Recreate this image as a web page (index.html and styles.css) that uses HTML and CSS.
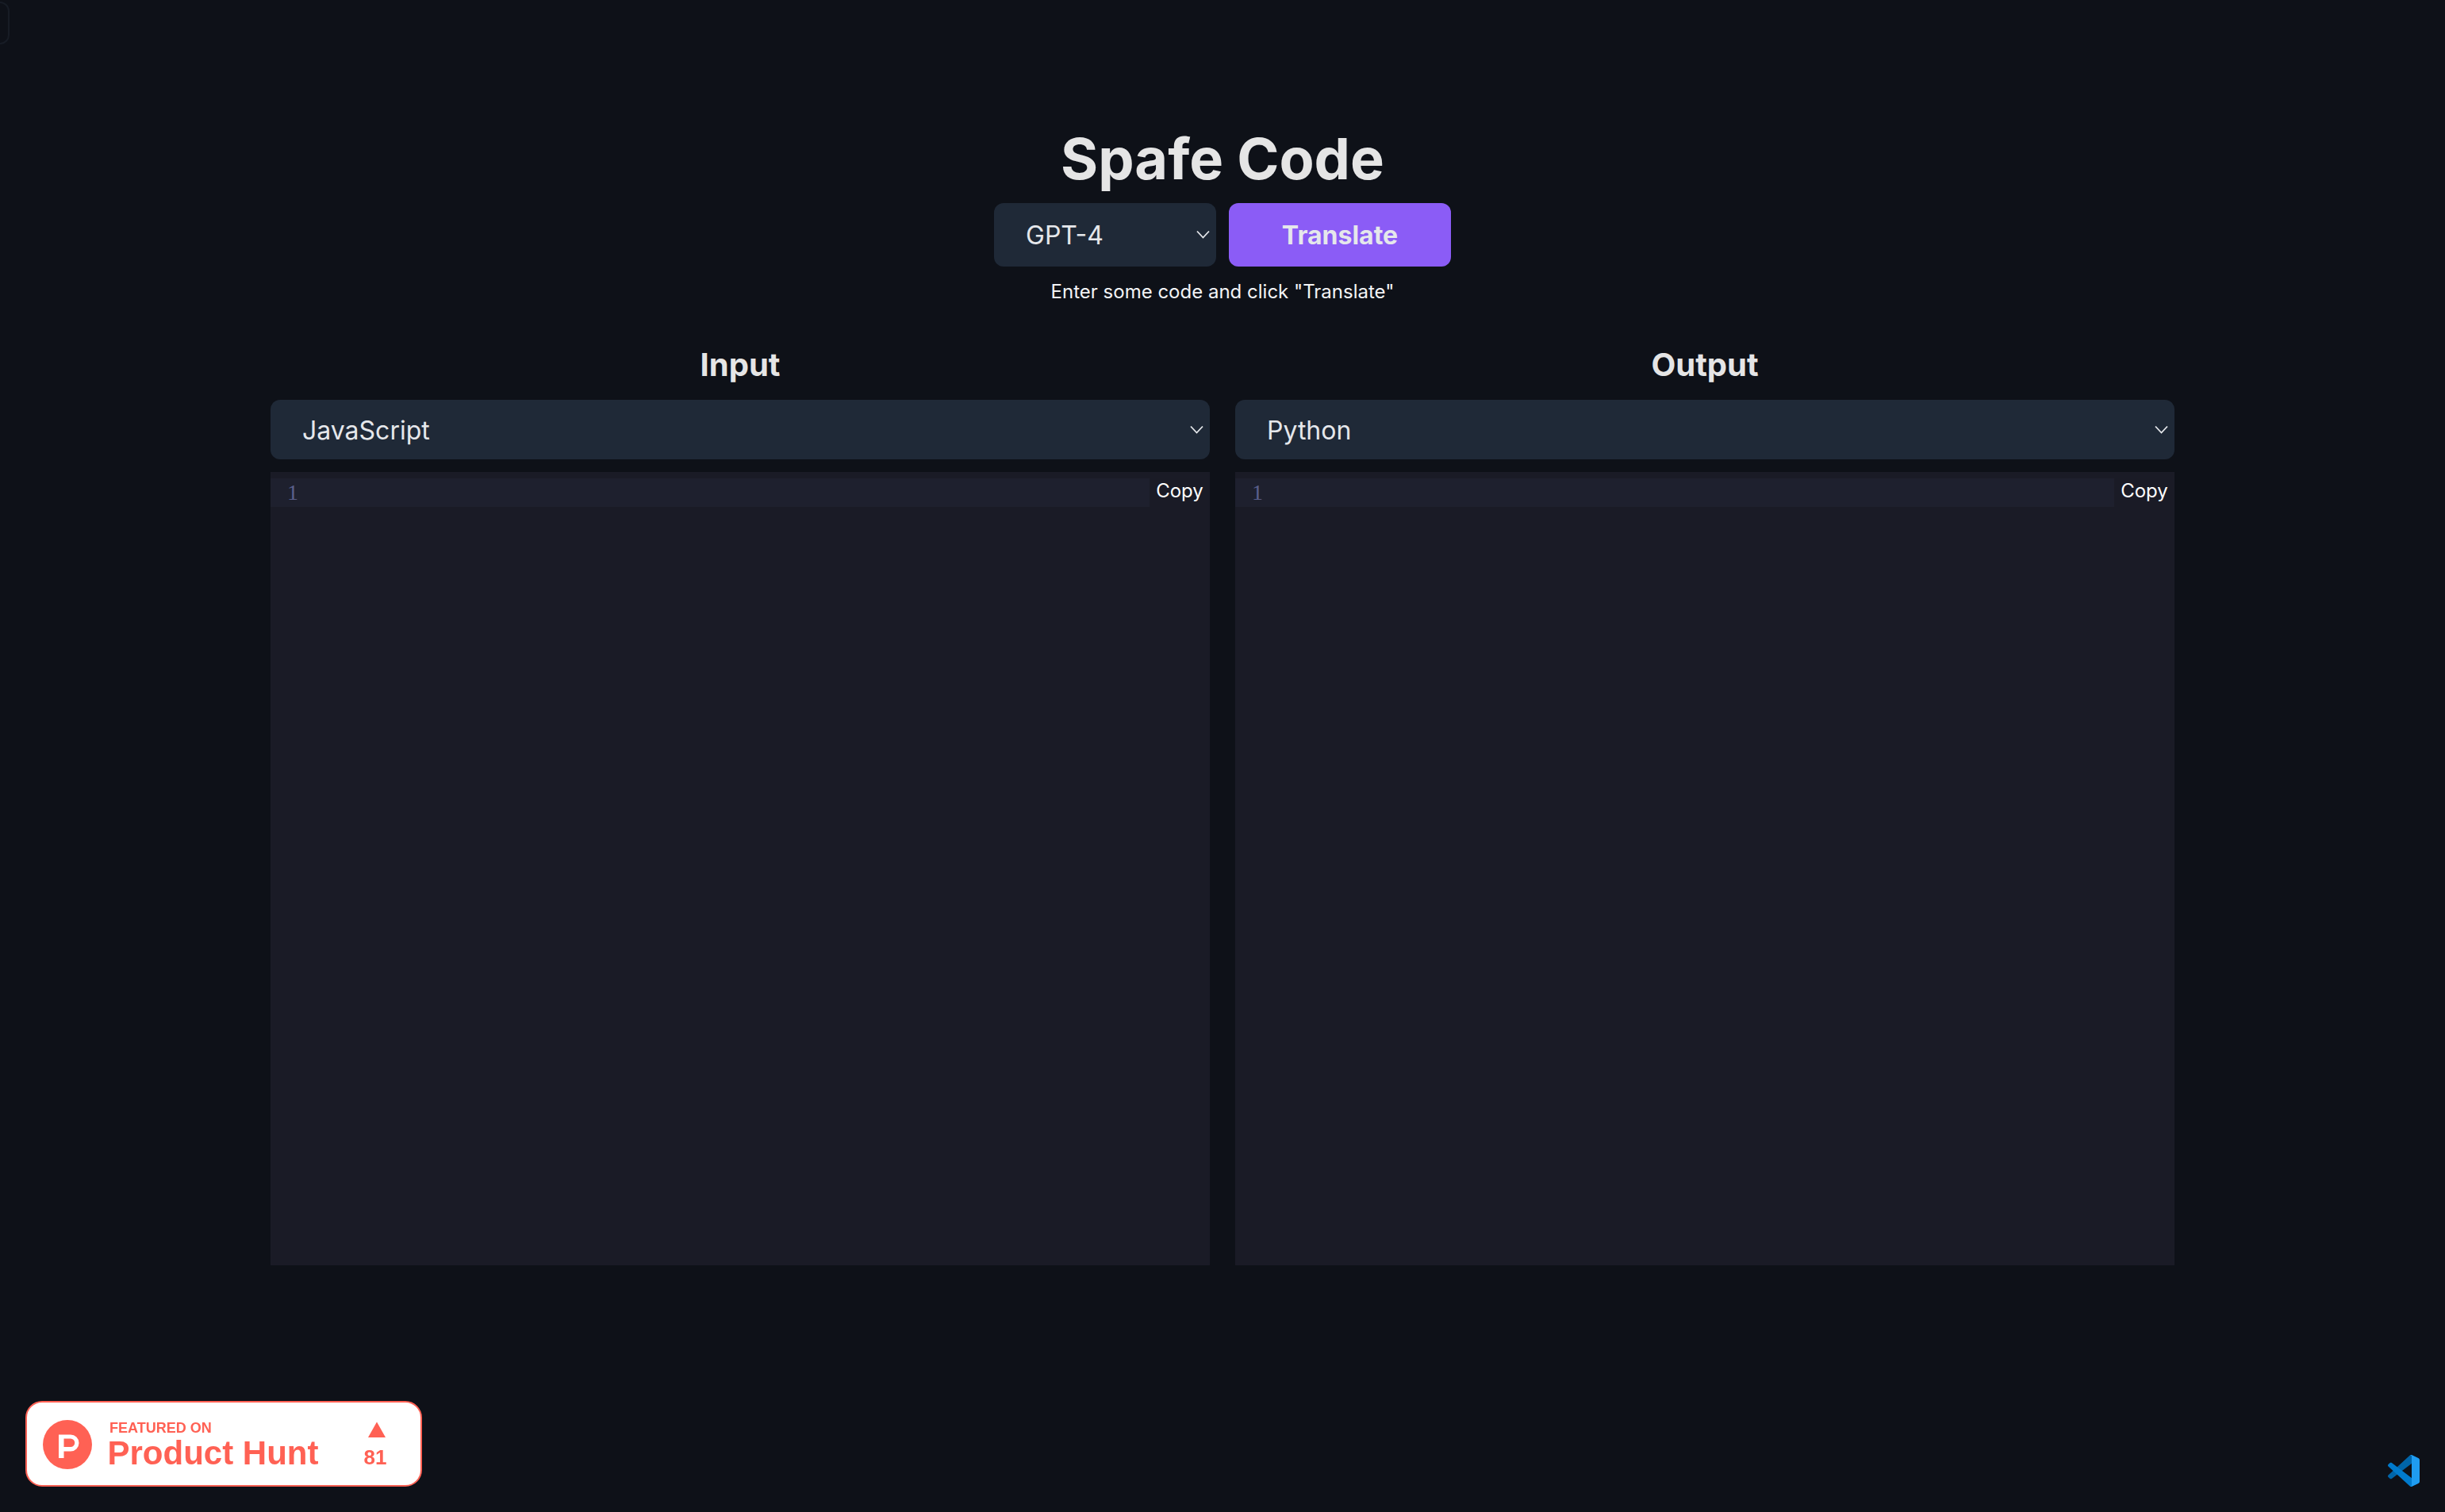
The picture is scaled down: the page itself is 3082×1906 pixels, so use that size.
FILE: index.html
```html
<!DOCTYPE html>
<html lang="en">
<head>
<meta charset="utf-8">
<title>Spafe Code</title>
<link rel="stylesheet" href="styles.css">
</head>
<body>
<div class="corner-ghost"></div>
<main class="page">
  <h1 class="title">Spafe Code</h1>
  <div class="controls">
    <div class="select-wrap model">
      <select class="select"><option>GPT-4</option></select>
      <svg class="chevron" viewBox="0 0 17 11"><path d="M1 1.5l7.5 8 7.5-8" fill="none" stroke="currentColor" stroke-width="1.8"/></svg>
    </div>
    <button class="translate">Translate</button>
  </div>
  <p class="hint">Enter some code and click "Translate"</p>
  <div class="panes">
    <section class="pane">
      <h2 class="pane-title">Input</h2>
      <div class="select-wrap">
        <select class="select"><option>JavaScript</option></select>
        <svg class="chevron" viewBox="0 0 17 11"><path d="M1 1.5l7.5 8 7.5-8" fill="none" stroke="currentColor" stroke-width="1.8"/></svg>
      </div>
      <div class="editor">
        <div class="line"><span class="num">1</span></div>
        <button class="copy">Copy</button>
      </div>
    </section>
    <section class="pane">
      <h2 class="pane-title">Output</h2>
      <div class="select-wrap">
        <select class="select"><option>Python</option></select>
        <svg class="chevron" viewBox="0 0 17 11"><path d="M1 1.5l7.5 8 7.5-8" fill="none" stroke="currentColor" stroke-width="1.8"/></svg>
      </div>
      <div class="editor">
        <div class="line"><span class="num">1</span></div>
        <button class="copy">Copy</button>
      </div>
    </section>
  </div>
</main>
<a class="ph-badge">
  <svg viewBox="0 0 500 108" width="500" height="108">
    <rect x="1" y="1" width="498" height="106" rx="20" fill="#fff" stroke="#ff6154" stroke-width="2"/>
    <circle cx="53" cy="55" r="31" fill="#ff6154"/>
    <path d="M42 42.500h15a10.500 10.500 0 0 1 0 21h-8.500V72H42zM48.500 47.500V58H57a5.250 5.250 0 0 0 0-10.500z" fill="#fff" fill-rule="evenodd"/>
    <text class="ph-small" x="106" y="40">FEATURED ON</text>
    <text class="ph-big" x="103.500" y="80">Product Hunt</text>
    <path d="M443 26.500L454 46h-22z" fill="#ff6154"/>
    <text class="ph-count" x="426.500" y="80">81</text>
  </svg>
</a>
<svg class="vscode" viewBox="0 0 100 100">
  <path d="M96.46 10.8L75.86.88C73.47-.27 70.62.21 68.750 2.080L1.300 63.580c-1.820 1.660-1.810 4.510 0 6.160l5.510 5.010c1.490 1.350 3.720 1.450 5.320.24L93.360 13.370C96.090 11.300 100 13.250 100 16.670v-.24c0-2.400-1.380-4.590-3.540-5.630z" fill="#0065a9"/>
  <path d="M96.46 89.200L75.860 99.120c-2.390 1.150-5.240.67-7.110-1.200L1.300 36.420c-1.820-1.660-1.810-4.510 0-6.160l5.510-5.010c1.490-1.350 3.720-1.450 5.320-.24l81.230 61.620c2.730 2.070 6.640.12 6.640-3.300v.24c0 2.400-1.380 4.590-3.540 5.630z" fill="#007acc"/>
  <path d="M75.860 99.130c-2.390 1.150-5.240.66-7.110-1.210 2.310 2.300 6.250.67 6.250-2.590V4.670c0-3.260-3.940-4.890-6.250-2.590C70.620.21 73.470-.27 75.860.87l20.600 9.910C98.620 11.820 100 14.010 100 16.410v67.180c0 2.400-1.380 4.590-3.540 5.630z" fill="#1f9cf0"/>
</svg>
</body>
</html>
```
FILE: styles.css
```css
* { box-sizing: border-box; }
html, body { margin: 0; height: 100%; }
body {
  background: #0e1118;
  color: #e5e5e5;
  font-family: Inter, "Liberation Sans", sans-serif;
  overflow: hidden;
}
.page {
  display: flex;
  flex-direction: column;
  align-items: center;
  padding-top: 160px;
}
.title {
  margin: 0;
  font-size: 72px;
  line-height: 80px;
  font-weight: 700;
  color: #e5e5e5;
}
.controls {
  display: flex;
  gap: 16px;
  margin-top: 16px;
}
.select-wrap {
  position: relative;
  color: #e5e7eb;
}
.select-wrap.model { width: 280px; }
.select {
  display: block;
  width: 100%;
  height: 75px;
  padding: 2px 40px 0;
  border: 0;
  border-radius: 12px;
  background: #1f2937;
  color: #e5e7eb;
  font: 400 32px/40px Inter, sans-serif;
  appearance: none;
  -webkit-appearance: none;
}
.model .select { height: 80px; }
.chevron {
  position: absolute;
  right: 8px;
  top: 50%;
  width: 17px;
  height: 11px;
  margin-top: -6px;
}
.translate {
  width: 280px;
  height: 80px;
  padding: 2px 0 0;
  border: 0;
  border-radius: 12px;
  background: #8b5cf6;
  color: #e5e7eb;
  font: 700 32px/40px Inter, sans-serif;
}
.hint {
  margin: 12px 0 0;
  font-size: 24px;
  line-height: 40px;
  color: #f3f4f6;
}
.panes {
  display: flex;
  gap: 32px;
  width: 2400px;
  margin-top: 44px;
}
.pane {
  flex: 1 1 0;
  display: flex;
  flex-direction: column;
}
.pane-title {
  margin: 0 0 16px;
  font-size: 40px;
  line-height: 56px;
  font-weight: 700;
  text-align: center;
  color: #e5e5e5;
}
.editor {
  position: relative;
  height: 1000px;
  margin-top: 16px;
  padding-top: 8px;
  background: #1a1b26;
}
.line {
  height: 36px;
  padding-left: 21px;
  background: #1e202e;
}
.num {
  display: block;
  font: 400 28px/36px "Liberation Serif", serif;
  color: #5a5f8a;
}
.copy {
  position: absolute;
  top: 0;
  right: 0;
  width: 76px;
  height: 47px;
  padding: 0;
  border: 0;
  background: #1a1b26;
  color: #fff;
  font: 400 24px/47px Inter, sans-serif;
  text-align: center;
}
.ph-badge {
  position: fixed;
  left: 32px;
  bottom: 32px;
  display: block;
  width: 500px;
  height: 108px;
}
.ph-badge svg { display: block; }
.ph-small { font: 700 18px "Liberation Sans", sans-serif; fill: #ff6154; }
.ph-big { font: 700 42px "Liberation Sans", sans-serif; fill: #ff6154; }
.ph-count { font: 700 26px "Liberation Sans", sans-serif; fill: #ff6154; }
.vscode {
  position: fixed;
  left: 3010px;
  top: 1834px;
  width: 40px;
  height: 40px;
}
.corner-ghost {
  position: fixed;
  left: -30px;
  top: 2px;
  width: 42px;
  height: 54px;
  border: 2px solid #171c25;
  border-radius: 12px;
}
```
